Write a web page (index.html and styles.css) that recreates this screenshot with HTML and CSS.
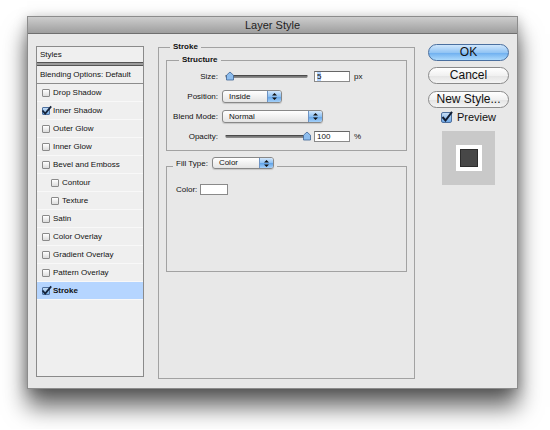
FILE: index.html
```html
<!DOCTYPE html>
<html lang="en">
<head>
    <meta charset="UTF-8">
    <title>Layer Style</title>
    <link rel="stylesheet" href="styles.css">
</head>
<body>
    <div class="window">
        <div class="titlebar">Layer Style</div>

        <div class="content">
            <!-- lista de efeitos -->
            <div class="styles-list">
                <div class="list-head">Styles</div>
                <div class="list-sep"></div>
                <div class="list-blend">Blending Options: Default</div>
                <div class="list-item"><span class="cb"></span>Drop Shadow</div>
                <div class="list-item"><span class="cb on"><svg width="10" height="9" viewBox="0 0 10 9"><path d="M0.5 4.5 L3.2 7.6 L9.2 0.4" fill="none" stroke="#15233a" stroke-width="1.8"/></svg></span>Inner Shadow</div>
                <div class="list-item"><span class="cb"></span>Outer Glow</div>
                <div class="list-item"><span class="cb"></span>Inner Glow</div>
                <div class="list-item"><span class="cb"></span>Bevel and Emboss</div>
                <div class="list-item sub"><span class="cb"></span>Contour</div>
                <div class="list-item sub"><span class="cb"></span>Texture</div>
                <div class="list-item"><span class="cb"></span>Satin</div>
                <div class="list-item"><span class="cb"></span>Color Overlay</div>
                <div class="list-item"><span class="cb"></span>Gradient Overlay</div>
                <div class="list-item"><span class="cb"></span>Pattern Overlay</div>
                <div class="list-item selected"><span class="cb on"><svg width="10" height="9" viewBox="0 0 10 9"><path d="M0.5 4.5 L3.2 7.6 L9.2 0.4" fill="none" stroke="#15233a" stroke-width="1.8"/></svg></span><b>Stroke</b></div>
            </div>

            <!-- painel do traço -->
            <div class="stroke-group group">
                <div class="legend">Stroke</div>

                <div class="structure group">
                    <div class="legend legend-inner">Structure</div>
                    <div class="rows">
                        <div class="row">
                            <label>Size:</label>
                            <svg class="slider" width="86" height="10" viewBox="0 0 86 10">
                                <rect x="0.5" y="4" width="82" height="3" rx="1.5" fill="#8a8a8a"/>
                                <rect x="0.5" y="4" width="82" height="1.3" rx="0.6" fill="#4a4a4a"/>
                                <path d="M1.5 4.2 L5 1 L8.5 4.2 V9 H1.5 Z" fill="#8dbdee" stroke="#3f6496" stroke-width="0.8"/>
                            </svg>
                            <span class="field"><span class="sel">5</span></span>
                            <span class="unit">px</span>
                        </div>
                        <div class="row">
                            <label>Position:</label>
                            <div class="popup popup-position">
                                <span class="popup-text">Inside</span>
                                <span class="popup-arrow"><svg width="7" height="9" viewBox="0 0 7 9"><path d="M1 3.6 L3.5 1 L6 3.6 Z M1 5.4 L3.5 8 L6 5.4 Z" fill="#111"/></svg></span>
                            </div>
                        </div>
                        <div class="row">
                            <label>Blend Mode:</label>
                            <div class="popup popup-blend">
                                <span class="popup-text">Normal</span>
                                <span class="popup-arrow"><svg width="7" height="9" viewBox="0 0 7 9"><path d="M1 3.6 L3.5 1 L6 3.6 Z M1 5.4 L3.5 8 L6 5.4 Z" fill="#111"/></svg></span>
                            </div>
                        </div>
                        <div class="row">
                            <label>Opacity:</label>
                            <svg class="slider" width="86" height="10" viewBox="0 0 86 10">
                                <rect x="0.5" y="4" width="81" height="3" rx="1.5" fill="#8a8a8a"/>
                                <rect x="0.5" y="4" width="81" height="1.3" rx="0.6" fill="#4a4a4a"/>
                                <path d="M78.5 4.2 L82 1 L85.5 4.2 V9 H78.5 Z" fill="#8dbdee" stroke="#3f6496" stroke-width="0.8"/>
                            </svg>
                            <span class="field">100</span>
                            <span class="unit">%</span>
                        </div>
                    </div>
                </div>

                <div class="fill group">
                    <div class="fill-legend">
                        <label>Fill Type:</label>
                        <div class="popup popup-fill">
                            <span class="popup-text">Color</span>
                            <span class="popup-arrow"><svg width="7" height="9" viewBox="0 0 7 9"><path d="M1 3.6 L3.5 1 L6 3.6 Z M1 5.4 L3.5 8 L6 5.4 Z" fill="#111"/></svg></span>
                        </div>
                    </div>
                    <div class="color-row">
                        <label>Color:</label>
                        <span class="swatch"></span>
                    </div>
                </div>
            </div>

            <!-- botões -->
            <div class="actions">
                <div class="btn btn-default">OK</div>
                <div class="btn">Cancel</div>
                <div class="btn btn-last">New Style...</div>
                <div class="preview-row">
                    <span class="pcb"><svg width="12" height="12" viewBox="0 0 12 12"><path d="M1.5 6 L4.5 9.5 L11 0.8" fill="none" stroke="#111c30" stroke-width="2"/></svg></span>
                    Preview
                </div>
                <div class="preview-box">
                    <div class="preview-white"><div class="preview-dark"></div></div>
                </div>
            </div>
        </div>
    </div>
</body>
</html>
```

FILE: styles.css
```css
html {
    background-color: #fff;
}
body {
    margin: 0;
    padding: 16px 0 40px 27px;
    font-family: "Liberation Sans", Arial, sans-serif;
    font-size: 8px;
    color: #111;
}
.window {
    width: 491px;
    height: 373px;
    box-sizing: border-box;
    border: 1px solid #8c8c8c;
    background-color: #e8e8e8;
    box-shadow: 0 18px 22px rgba(0,0,0,0.6), 0 2px 12px rgba(0,0,0,0.25);
}
.titlebar {
    height: 17px;
    box-sizing: border-box;
    border-bottom: 1px solid #6f6f6f;
    background: linear-gradient(#cdcdcd, #9e9e9e);
    text-align: center;
    font-size: 11px;
    line-height: 16px;
    color: #1e1e1e;
}
.content {
    display: flex;
    align-items: flex-start;
    padding: 10px 0 0 8px;
}

/* lista */
.styles-list {
    width: 108px;
    height: 331px;
    box-sizing: border-box;
    margin-top: 2px;
    border: 1px solid #8a8a8a;
    background-color: #efefef;
}
.list-head {
    height: 15px;
    line-height: 15px;
    padding-left: 3px;
}
.list-sep {
    height: 2px;
    border-top: 1px solid #555;
    border-bottom: 1px solid #555;
    background-color: #9c9c9c;
}
.list-blend {
    height: 17px;
    line-height: 17px;
    padding-left: 3px;
    border-bottom: 1px solid #8c8c8c;
}
.list-item {
    display: flex;
    align-items: center;
    height: 17px;
    padding-left: 5px;
    border-bottom: 1px solid #f8f8f8;
}
.list-item.sub {
    padding-left: 14px;
}
.list-item.selected {
    background-color: #b5d5ff;
}
.cb {
    display: flex;
    flex: none;
    width: 8px;
    height: 8px;
    box-sizing: border-box;
    margin-right: 3px;
    border: 1px solid #8a8a8a;
    border-radius: 1px;
    background: linear-gradient(#fff, #dcdcdc);
}
.cb.on {
    border-color: #4d6f9e;
    background: linear-gradient(#c6def6, #78aee6);
}
.cb svg {
    flex: none;
    margin: -2px 0 0 -1px;
    overflow: visible;
}

/* grupos */
.group {
    border: 1px solid #a2a2a2;
}
.stroke-group {
    width: 257px;
    height: 332px;
    box-sizing: border-box;
    margin: 3px 0 0 14px;
    padding: 0 7px;
}
.legend {
    display: table;
    margin: -6px 0 0 4px;
    padding: 0 3px;
    line-height: 10px;
    font-weight: bold;
    background-color: #e8e8e8;
}
.legend-inner {
    margin-left: 12px;
}
.structure {
    height: 91px;
    box-sizing: border-box;
    margin-top: 8px;
}
.rows {
    margin-top: 1px;
}
.row {
    display: flex;
    align-items: center;
    height: 20px;
}
.row label {
    flex: none;
    width: 51px;
    margin-right: 4px;
    text-align: right;
}
.slider {
    flex: none;
    margin-left: 3px;
}
.field {
    flex: none;
    width: 36px;
    height: 11px;
    box-sizing: border-box;
    margin-left: 3px;
    padding-left: 2px;
    border: 1px solid #8a8a8a;
    border-top-color: #666;
    background-color: #fff;
    line-height: 9px;
}
.sel {
    background-color: #b5d5ff;
}
.unit {
    margin-left: 4px;
}
.popup {
    display: flex;
    flex: none;
    height: 13px;
    box-sizing: border-box;
    border: 1px solid #888;
    border-radius: 3px;
    background: linear-gradient(#fff, #e4e4e4);
    overflow: hidden;
    box-shadow: 0 1px 1px rgba(0,0,0,0.15);
}
.popup-text {
    flex: 1;
    padding-left: 6px;
    line-height: 11px;
}
.popup-arrow {
    display: flex;
    align-items: center;
    justify-content: center;
    width: 13px;
    border-left: 1px solid #6d93c4;
    background: linear-gradient(#d4e8fc, #8dc0f2 50%, #5fa2e8 51%, #a5d0f8);
}
.popup-position {
    width: 60px;
}
.popup-blend {
    width: 101px;
}
.popup-fill {
    width: 62px;
    height: 12px;
}
.popup-fill .popup-text {
    line-height: 10px;
}
.fill {
    height: 106px;
    box-sizing: border-box;
    margin-top: 15px;
}
.fill-legend {
    display: flex;
    align-items: center;
    width: fit-content;
    height: 12px;
    margin: -10px 0 0 6px;
    padding: 0 3px;
    background-color: #e8e8e8;
}
.fill-legend label {
    margin-right: 4px;
}
.color-row {
    display: flex;
    align-items: center;
    height: 14px;
    margin-top: 13px;
    padding-left: 9px;
}
.swatch {
    width: 28px;
    height: 11px;
    box-sizing: border-box;
    margin-left: 3px;
    border: 1px solid #8a8a8a;
    background-color: #fff;
}

/* coluna direita */
.actions {
    display: flex;
    flex-direction: column;
    align-items: center;
    width: 81px;
    margin-left: 13px;
}
.btn {
    width: 81px;
    height: 17px;
    box-sizing: border-box;
    margin-bottom: 6px;
    border: 1px solid #8a8a8a;
    border-radius: 9px;
    background: linear-gradient(#fff, #f1f1f1 50%, #e4e4e4 51%, #f4f4f4);
    font-size: 12px;
    line-height: 15px;
    text-align: center;
    color: #111;
}
.btn-default {
    border-color: #4a6f9f;
    background: linear-gradient(#cfe6fc, #93c5f4 50%, #6badef 51%, #addafc);
}
.btn-last {
    margin-bottom: 0;
    margin-top: 1px;
}
.preview-row {
    display: flex;
    align-items: center;
    margin-top: 4px;
    font-size: 11px;
    line-height: 11px;
}
.pcb {
    display: flex;
    width: 11px;
    height: 11px;
    box-sizing: border-box;
    margin-right: 5px;
    border: 1px solid #4d6f9e;
    border-radius: 2px;
    background: linear-gradient(#c6def6, #6fa8e6);
}
.pcb svg {
    flex: none;
    margin: -2px 0 0 -1px;
    overflow: visible;
}
.preview-box {
    display: flex;
    align-items: center;
    justify-content: center;
    width: 53px;
    height: 54px;
    margin-top: 8px;
    background-color: #c9c9c9;
}
.preview-white {
    width: 26px;
    height: 26px;
    box-sizing: border-box;
    padding: 4px;
    background-color: #fff;
}
.preview-dark {
    height: 100%;
    box-sizing: border-box;
    border: 1px solid #2c2c2c;
    background-color: #474747;
}
```
